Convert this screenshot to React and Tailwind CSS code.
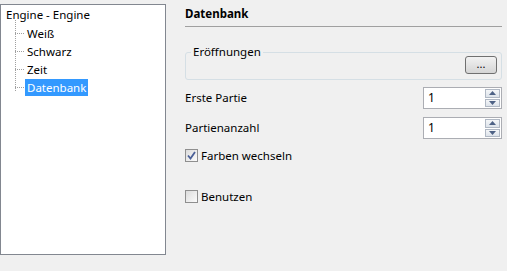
import React from "react";

const font = { fontFamily: '"Segoe UI", "Noto Sans", "Liberation Sans", sans-serif' };

function TreeItem({ label, selected }) {
  return (
    <div className="flex h-[18px] items-center">
      <span className="h-0 w-[9px] border-t border-dotted border-[#a0a0a0]" />
      <span
        className={
          selected
            ? "ml-[1px] bg-[#3399ff] px-[2px] leading-[17px] text-white"
            : "ml-[1px] px-[2px] leading-[17px] text-black"
        }
      >
        {label}
      </span>
    </div>
  );
}

function SpinBox({ value }) {
  return (
    <div className="flex h-[22px] w-[79px] border border-[#abadb3] bg-white">
      <span className="flex-1 pl-[4px] text-[12px] leading-[20px] text-black">{value}</span>
      <div className="my-[1px] mr-[1px] flex w-[15px] flex-col gap-[1px]">
        <div className="flex flex-1 items-center justify-center border border-[#b0b8c4] bg-gradient-to-b from-[#f4f6f8] to-[#dde3ea]">
          <svg width="7" height="4" viewBox="0 0 7 4">
            <path d="M0 4 L3.5 0 L7 4 Z" fill="#4d6185" />
          </svg>
        </div>
        <div className="flex flex-1 items-center justify-center border border-[#b0b8c4] bg-gradient-to-b from-[#f4f6f8] to-[#dde3ea]">
          <svg width="7" height="4" viewBox="0 0 7 4">
            <path d="M0 0 L7 0 L3.5 4 Z" fill="#4d6185" />
          </svg>
        </div>
      </div>
    </div>
  );
}

function CheckBox({ checked, label }) {
  return (
    <label className="flex h-[15px] items-center gap-[3px]">
      <span className="flex h-[13px] w-[13px] items-center justify-center border border-[#8f8f8f] bg-gradient-to-br from-[#dcdcdc] to-[#fbfbfb]">
        {checked && (
          <svg width="9" height="9" viewBox="0 0 9 9">
            <path d="M1 4.5 L3.5 7.5 L8 1" fill="none" stroke="#4a5f97" strokeWidth="1.8" />
          </svg>
        )}
      </span>
      <span className="leading-[15px] text-black">{label}</span>
    </label>
  );
}

export default function App() {
  return (
    <div className="flex h-[271px] w-[507px] bg-[#f0f0f0] text-[11.5px]" style={font}>
      <div className="pt-[4px]">
        <div className="h-[251px] w-[166px] border border-[#828790] bg-white pl-[5px] pt-[1px]">
          <div className="leading-[18px] text-black">Engine - Engine</div>
          <div className="relative ml-[9px]">
            <div className="absolute left-0 top-[-4px] h-[71px] border-l border-dotted border-[#a0a0a0]" />
            <TreeItem label="Weiß" />
            <TreeItem label="Schwarz" />
            <TreeItem label="Zeit" />
            <TreeItem label="Datenbank" selected />
          </div>
        </div>
      </div>

      <div className="ml-[19px] flex w-[317px] flex-col">
        <div className="pt-[5px] text-[11.5px] font-bold leading-[17px] text-black">Datenbank</div>
        <div className="mt-[4px] border-t border-[#a0a0a0]" />

        <div className="mt-[25px] relative h-[28px] rounded-[3px] border border-[#d5dfe5]">
          <span className="absolute left-[5px] top-[-9px] bg-[#f0f0f0] px-[2px] leading-[16px] text-black">
            Eröffnungen
          </span>
          <div className="flex h-full items-start justify-end pr-[4px] pt-[3px]">
            <button className="flex h-[18px] w-[32px] items-center justify-center rounded-[3px] border border-[#707070] bg-gradient-to-b from-[#f2f2f2] to-[#d5d5d5] pb-[4px] text-[11px] leading-none text-black">
              ...
            </button>
          </div>
        </div>

        <div className="mt-[7px] flex items-center justify-between">
          <span className="text-black">Erste Partie</span>
          <SpinBox value="1" />
        </div>
        <div className="mt-[8px] flex items-center justify-between">
          <span className="text-black">Partienanzahl</span>
          <SpinBox value="1" />
        </div>

        <div className="mt-[9px]">
          <CheckBox checked label="Farben wechseln" />
        </div>
        <div className="mt-[26px]">
          <CheckBox label="Benutzen" />
        </div>
      </div>
    </div>
  );
}
